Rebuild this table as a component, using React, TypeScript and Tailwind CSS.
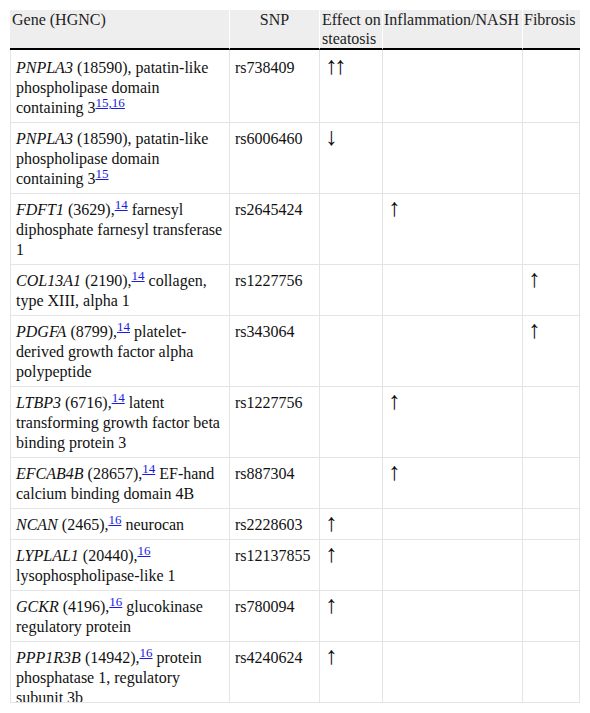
const rows = [
  { gene: 'PNPLA3', rest: ' (18590), patatin-like phospholipase domain containing 3', ref: '15,16', tail: '', snp: 'rs738409', steatosis: '↑↑', nash: '', fibrosis: '' },
  { gene: 'PNPLA3', rest: ' (18590), patatin-like phospholipase domain containing 3', ref: '15', tail: '', snp: 'rs6006460', steatosis: '↓', nash: '', fibrosis: '' },
  { gene: 'FDFT1', rest: ' (3629),', ref: '14', tail: ' farnesyl diphosphate farnesyl transferase 1', snp: 'rs2645424', steatosis: '', nash: '↑', fibrosis: '' },
  { gene: 'COL13A1', rest: ' (2190),', ref: '14', tail: ' collagen, type XIII, alpha 1', snp: 'rs1227756', steatosis: '', nash: '', fibrosis: '↑' },
  { gene: 'PDGFA', rest: ' (8799),', ref: '14', tail: ' platelet-derived growth factor alpha polypeptide', snp: 'rs343064', steatosis: '', nash: '', fibrosis: '↑' },
  { gene: 'LTBP3', rest: ' (6716),', ref: '14', tail: ' latent transforming growth factor beta binding protein 3', snp: 'rs1227756', steatosis: '', nash: '↑', fibrosis: '' },
  { gene: 'EFCAB4B', rest: ' (28657),', ref: '14', tail: ' EF-hand calcium binding domain 4B', snp: 'rs887304', steatosis: '', nash: '↑', fibrosis: '' },
  { gene: 'NCAN', rest: ' (2465),', ref: '16', tail: ' neurocan', snp: 'rs2228603', steatosis: '↑', nash: '', fibrosis: '' },
  { gene: 'LYPLAL1', rest: ' (20440),', ref: '16', tail: ' lysophospholipase-like 1', snp: 'rs12137855', steatosis: '↑', nash: '', fibrosis: '' },
  { gene: 'GCKR', rest: ' (4196),', ref: '16', tail: ' glucokinase regulatory protein', snp: 'rs780094', steatosis: '↑', nash: '', fibrosis: '' },
  { gene: 'PPP1R3B', rest: ' (14942),', ref: '16', tail: ' protein phosphatase 1, regulatory subunit 3b', snp: 'rs4240624', steatosis: '↑', nash: '', fibrosis: '' },
];

// arrows in the source are taller than Liberation Serif's glyph at 16px
function Arrow({ value }: { value: string }) {
  if (!value) return null;
  return (
    <span className="inline-block align-top h-[20px] text-[25px] leading-[20px] tracking-[-3.5px] relative top-[-2px]">{value}</span>
  );
}

export default function App() {
  return (
    <div className="bg-white min-h-[713px] pt-[10px] pl-[10px] font-['Liberation_Serif','Times_New_Roman',serif] text-[16px] text-[#111]">
      <div className="w-[570px] h-[693px] overflow-hidden border-b border-[#e4e4e4]">
        <table className="table-fixed w-[570px] border-separate border-spacing-0">
          <colgroup>
            <col className="w-[220px]" />
            <col className="w-[90px]" />
            <col className="w-[63px]" />
            <col className="w-[140px]" />
            <col className="w-[57px]" />
          </colgroup>
          <thead>
            <tr className="bg-[#eeeeee] text-[#222] leading-[19px] align-top">
              <th className="font-normal text-left pl-[2px] border-b-2 border-b-black border-r border-r-white">Gene (HGNC)</th>
              <th className="font-normal text-center border-b-2 border-b-black border-r border-r-white">SNP</th>
              <th className="font-normal text-left pl-[2px] border-b-2 border-b-black border-r border-r-white">Effect on steatosis</th>
              <th className="font-normal text-left pl-[1px] border-b-2 border-b-black border-r border-r-white">Inflammation/NASH</th>
              <th className="font-normal text-left pl-[1px] border-b-2 border-b-black">Fibrosis</th>
            </tr>
          </thead>
          <tbody>
            {rows.map((row, index) => {
              const pad = index === 0 ? 'pt-[8px] pb-[4px]' : 'pt-[6px] pb-[4px]';
              return (
                <tr key={index} className="align-top leading-[20px]">
                  <td className={`${pad} pl-[5px] pr-[5px] border-l border-r border-b border-[#e4e4e4]`}>
                    <i>{row.gene}</i>
                    {row.rest}
                    <sup className="text-[13px] top-[-6px]">
                      <a className="text-[#1a1ae0] underline">{row.ref}</a>
                    </sup>
                    {row.tail}
                  </td>
                  <td className={`${pad} pl-[5px] pr-[4px] border-r border-b border-[#e4e4e4]`}>{row.snp}</td>
                  <td className={`${pad} pl-[5px] border-r border-b border-[#e4e4e4]`}><Arrow value={row.steatosis} /></td>
                  <td className={`${pad} pl-[5px] border-r border-b border-[#e4e4e4]`}><Arrow value={row.nash} /></td>
                  <td className={`${pad} pl-[5px] border-r border-b border-[#e4e4e4]`}><Arrow value={row.fibrosis} /></td>
                </tr>
              );
            })}
          </tbody>
        </table>
      </div>
    </div>
  );
}
